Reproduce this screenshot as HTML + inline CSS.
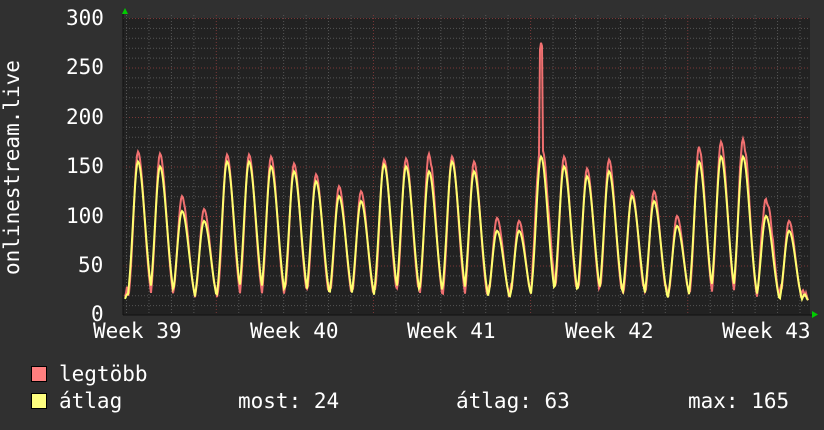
<!DOCTYPE html>
<html><head><meta charset="utf-8"><style>
html,body{margin:0;padding:0;background:#303030;}
body{width:824px;height:430px;overflow:hidden;position:relative;font-family:"DejaVu Sans Mono","Liberation Mono",monospace;color:#fff;}
.t{position:absolute;font-size:21px;line-height:21px;white-space:pre;}
.sq{position:absolute;width:14px;height:14px;border:1px solid #000;}
</style></head><body>
<svg id="g" width="824" height="430" style="position:absolute;left:0;top:0">
<rect x="123" y="18" width="687" height="297" fill="#222"/>
<g id="grid"></g>
<polyline id="pk" fill="none" stroke="#f07070" stroke-width="2"/>
<polyline id="av" fill="none" stroke="#ffff70" stroke-width="2"/>
<line x1="123" y1="315" x2="812" y2="315" stroke="#111" stroke-width="1"/>
<line x1="123" y1="14" x2="123" y2="315" stroke="#111" stroke-width="1"/>
<polygon points="122,14 128,14 125,8" fill="#0c0"/>
<polygon points="812,311 812,318 818,314.5" fill="#0c0"/>
</svg>
<div class="t" style="left:66px;top:8px">300</div>
<div class="t" style="left:66px;top:57px">250</div>
<div class="t" style="left:66px;top:107px">200</div>
<div class="t" style="left:66px;top:156px">150</div>
<div class="t" style="left:66px;top:206px">100</div>
<div class="t" style="left:78px;top:255px">50</div>
<div class="t" style="left:91px;top:304px">0</div>
<div class="t" style="top:275px;left:2px;transform:rotate(-90deg);transform-origin:0 0">onlinestream.live</div>
<div class="t" style="left:93px;top:321px">Week 39</div>
<div class="t" style="left:250px;top:321px">Week 40</div>
<div class="t" style="left:407px;top:321px">Week 41</div>
<div class="t" style="left:565px;top:321px">Week 42</div>
<div class="t" style="left:722px;top:321px">Week 43</div>
<div class="sq" style="left:31px;top:366px;background:#ff7f7f"></div>
<div class="sq" style="left:31px;top:393px;background:#ffff7f"></div>
<div class="t" style="left:59px;top:364px">legtöbb</div>
<div class="t" style="left:59px;top:391px">átlag</div>
<div class="t" style="left:238px;top:391px">most: 24</div>
<div class="t" style="left:456px;top:391px">átlag: 63</div>
<div class="t" style="left:688px;top:391px">max: 165</div>
<script>
var ns="http://www.w3.org/2000/svg",g=document.getElementById("grid");
function ln(x1,y1,x2,y2,c){var l=document.createElementNS(ns,"line");l.setAttribute("x1",x1);l.setAttribute("y1",y1);l.setAttribute("x2",x2);l.setAttribute("y2",y2);l.setAttribute("stroke",c);l.setAttribute("stroke-dasharray","1,2");g.appendChild(l);}
function Y(v){return 315-v*0.99;}
for(var v=10;v<=300;v+=10){ln(123,Y(v)+.5,810,Y(v)+.5,v%50==0?"#7a3838":"#555");}
for(var i=0;i<31;i++){var x=126.5+i*22.45;var maj=(i%7==4);ln(x,15,x,315,maj?"#7a3838":"#555");}
var P=[[138,165,155],[160,163,150],[182,120,105],[204,107,95],[227,162,155],[249,162,155],[271,160,150],[294,153,145],[316,142,135],[339,130,120],[361,125,115],[384,157,152],[406,158,150],[429,165,145],[452,160,155],[474,155,145],[497,98,85],[519,95,85],[541,275,160],[564,160,150],[587,148,140],[609,157,145],[632,125,120],[654,125,115],[677,100,90],[699,170,155],[721,175,160],[743,185,160],[766,135,100],[789,95,85]];
var a=[],b=[];
for(var x=125;x<=808;x++){var sp=0,sa=0;for(var k=0;k<P.length;k++){var d=x-P[k][0];var w=d<0?4.5:6.5;var e=Math.exp(-d*d/(2*w*w));sp=Math.max(sp,P[k][1]*e);sa=Math.max(sa,P[k][2]*Math.exp(-d*d/(2*(w+.5)*(w+.5))));}
var pv=Math.max(sp,24+6*Math.sin(x*1.7));var av=Math.max(sa,18+3*Math.sin(x*.9));
if(Math.abs(x-541)>1){pv=Math.min(pv,sa+12+6*Math.abs(Math.sin(x*.7)));}
a.push(x+","+Y(pv).toFixed(1));b.push(x+","+Y(av).toFixed(1));}
document.getElementById("pk").setAttribute("points",a.join(" "));
document.getElementById("av").setAttribute("points",b.join(" "));
</script>
</body></html>
